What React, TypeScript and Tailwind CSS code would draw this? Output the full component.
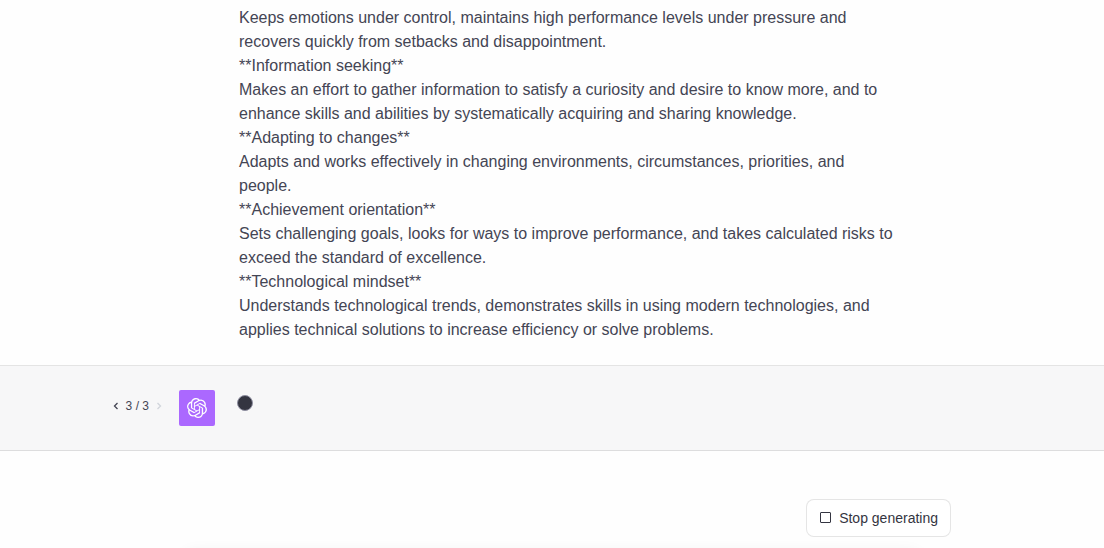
import { SiOpenai } from "react-icons/si";

interface Competency {
  title?: string;
  text: string;
}

const COMPETENCIES: Competency[] = [
  {
    text: "Keeps emotions under control, maintains high performance levels under pressure and recovers quickly from setbacks and disappointment.",
  },
  {
    title: "Information seeking",
    text: "Makes an effort to gather information to satisfy a curiosity and desire to know more, and to enhance skills and abilities by systematically acquiring and sharing knowledge.",
  },
  {
    title: "Adapting to changes",
    text: "Adapts and works effectively in changing environments, circumstances, priorities, and people.",
  },
  {
    title: "Achievement orientation",
    text: "Sets challenging goals, looks for ways to improve performance, and takes calculated risks to exceed the standard of excellence.",
  },
  {
    title: "Technological mindset",
    text: "Understands technological trends, demonstrates skills in using modern technologies, and applies technical solutions to increase efficiency or solve problems.",
  },
];

function Chevron({ points }: { points: string }) {
  return (
    <svg
      viewBox="0 0 12 12"
      className="h-3 w-3"
      fill="none"
      stroke="currentColor"
      strokeWidth="1.3"
      aria-hidden="true"
    >
      <polyline points={points} />
    </svg>
  );
}

function UserMessage({ items }: { items: Competency[] }) {
  return (
    <div className="border-b border-black/10">
      <div className="mx-auto max-w-[746px] pt-1.5 pb-[23px] pl-[60px] pr-7">
        {items.map((item) => (
          <div key={item.text}>
            {item.title && <p>**{item.title}**</p>}
            <p>{item.text}</p>
          </div>
        ))}
      </div>
    </div>
  );
}

function AssistantMessage({ page, total }: { page: number; total: number }) {
  return (
    <div className="border-b border-black/10 bg-[#f7f7f8]">
      <div className="relative mx-auto flex max-w-[746px] gap-[22px] py-6">
        {/* Response switcher */}
        <div className="absolute right-full top-8 mr-3.5 flex items-center gap-1 text-xs">
          <button aria-label="Previous response">
            <Chevron points="7.5 3 4.5 6 7.5 9" />
          </button>
          <span className="whitespace-nowrap">
            {page} / {total}
          </span>
          <button aria-label="Next response" disabled className="text-gray-300">
            <Chevron points="4.5 3 7.5 6 4.5 9" />
          </button>
        </div>
        <div className="flex h-9 w-9 shrink-0 items-center justify-center rounded-xs bg-[#ab68ff] text-white">
          <SiOpenai className="h-5 w-5" />
        </div>
        {/* Typing indicator */}
        <span className="mt-[5px] h-4 w-4 rounded-full border border-[#8e8ea0] bg-[#343541]" />
      </div>
    </div>
  );
}

export default function App() {
  return (
    <main className="flex h-screen flex-col overflow-hidden bg-[#fefefe] font-['Liberation_Sans',Arial,sans-serif] text-base text-[#444554]">
      <UserMessage items={COMPETENCIES} />
      <AssistantMessage page={3} total={3} />
      <div className="mx-auto mt-12 w-full max-w-[798px]">
        <div className="flex justify-end">
          <button className="flex items-center gap-2 rounded-lg border border-black/10 bg-white py-2 pl-[13px] pr-3 text-sm leading-5 text-[#343541]">
            <svg
              viewBox="0 0 11 11"
              className="mb-0.5 h-[11px] w-[11px]"
              fill="none"
              stroke="currentColor"
              aria-hidden="true"
            >
              <rect x="0.5" y="0.5" width="10" height="10" rx="0.5" />
            </svg>
            Stop generating
          </button>
        </div>
        <div className="mx-[30px] mt-4 h-14 rounded-xl border border-black/10 bg-white shadow-[0_0_15px_rgba(0,0,0,0.08)]" />
      </div>
    </main>
  );
}
